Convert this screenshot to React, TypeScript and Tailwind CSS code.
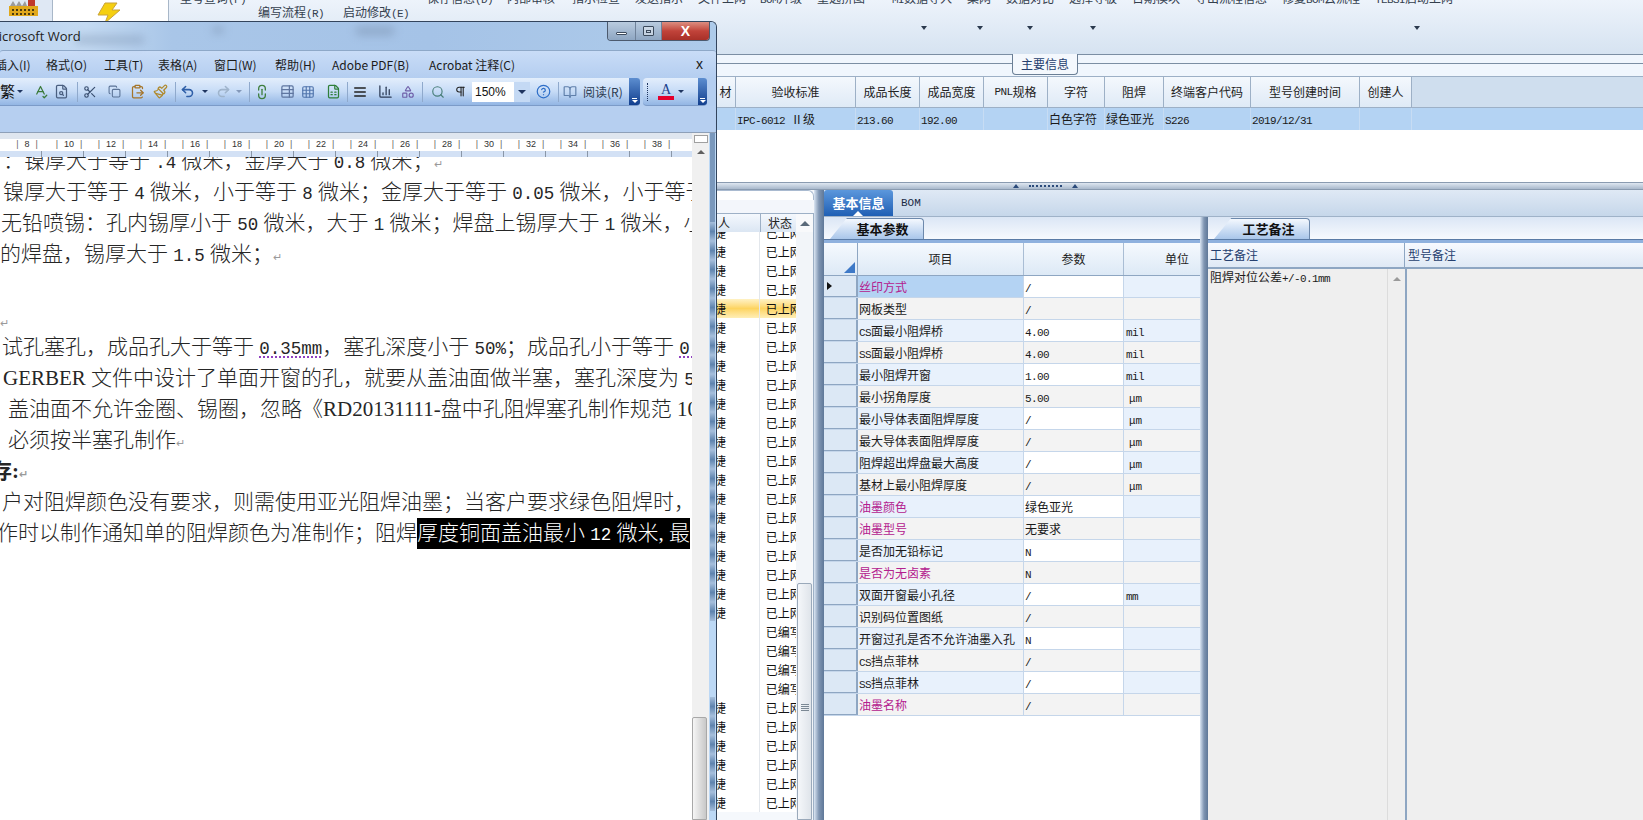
import type { ReactNode } from "react";
import {
  BookOpen, CircleHelp, ClipboardPaste, Copy, FileSearch, FileSpreadsheet, Grid3x3, Link2,
  Paintbrush, Pilcrow, Redo2, Scissors, Search, SpellCheck, TableProperties, Undo2, AlignJustify,
  BarChart3, Shapes,
} from "lucide-react";

const CJK = "font-['Noto_Sans_CJK_SC','Liberation_Sans',sans-serif]";

// ascii parts of the old app are half width bitmap glyphs, mono squeezed to 6px a char
const mix = (text: string) =>
  text.split(/([\x20-\x7e]+)/).filter(Boolean).map((part, i) =>
    /^[\x20-\x7e]+$/.test(part) ? (
      <span key={i} className="font-['Liberation_Mono',monospace] text-[11px] tracking-[-0.6px]">{part}</span>
    ) : (
      <span key={i}>{part}</span>
    )
  );

const ribbonItems = [
  { t: "型号查询(F)", w: "w-[247px]" },
  { t: "保存信息(D)", w: "w-[80px]" },
  { t: "内部审核", w: "w-[65px]" },
  { t: "指示检查", w: "w-[63px]" },
  { t: "发送指示", w: "w-[63px]" },
  { t: "文件上网", w: "w-[62px]" },
  { t: "BOM升级", w: "w-[57px]" },
  { t: "重选拼图", w: "w-[75px]" },
  { t: "MI数据导入", w: "w-[75px]" },
  { t: "集网", w: "w-[39px]" },
  { t: "数据对比", w: "w-[63px]" },
  { t: "选择导板", w: "w-[63px]" },
  { t: "日期模块", w: "w-[63px]" },
  { t: "导出流程信息", w: "w-[87px]" },
  { t: "修复BOM云流程", w: "w-[93px]" },
  { t: "TEBSI启动上网", w: "w-[90px]" },
];

const gridCols = [
  { h: "材", v: "", w: "w-[20px]" },
  { h: "验收标准", v: "IPC-6012 Ⅱ级", w: "w-[120px]" },
  { h: "成品长度", v: "213.60", w: "w-[64px]" },
  { h: "成品宽度", v: "192.00", w: "w-[64px]" },
  { h: "PNL规格", v: "", w: "w-[64px]" },
  { h: "字符", v: "白色字符", w: "w-[57px]" },
  { h: "阻焊", v: "绿色亚光", w: "w-[59px]" },
  { h: "终端客户代码", v: "S226", w: "w-[87px]" },
  { h: "型号创建时间", v: "2019/12/31", w: "w-[109px]" },
  { h: "创建人", v: "", w: "w-[52px]" },
];

const params = [
  { n: "丝印方式", v: "/", u: "", hot: true, sel: true },
  { n: "网板类型", v: "/", u: "" },
  { n: "CS面最小阻焊桥", v: "4.00", u: "mil" },
  { n: "SS面最小阻焊桥", v: "4.00", u: "mil" },
  { n: "最小阻焊开窗", v: "1.00", u: "mil" },
  { n: "最小拐角厚度", v: "5.00", u: "μm" },
  { n: "最小导体表面阻焊厚度", v: "/", u: "μm" },
  { n: "最大导体表面阻焊厚度", v: "/", u: "μm" },
  { n: "阻焊超出焊盘最大高度", v: "/", u: "μm" },
  { n: "基材上最小阻焊厚度", v: "/", u: "μm" },
  { n: "油墨颜色", v: "绿色亚光", u: "", hot: true },
  { n: "油墨型号", v: "无要求", u: "", hot: true },
  { n: "是否加无铅标记", v: "N", u: "" },
  { n: "是否为无卤素", v: "N", u: "", hot: true },
  { n: "双面开窗最小孔径", v: "/", u: "mm" },
  { n: "识别码位置图纸", v: "/", u: "" },
  { n: "开窗过孔是否不允许油墨入孔", v: "N", u: "" },
  { n: "CS挡点菲林", v: "/", u: "" },
  { n: "SS挡点菲林", v: "/", u: "" },
  { n: "油墨名称", v: "/", u: "", hot: true },
];

// rows of the list behind the word window, index 4 is the hovered one, 21-24 have no person
const listRows = Array.from({ length: 31 }, (_, i) => i);

const menuItems = [
  { t: "插入(I)", w: "w-[51px] -ml-[5px]" },
  { t: "格式(O)", w: "w-[58px]" },
  { t: "工具(T)", w: "w-[54px]" },
  { t: "表格(A)", w: "w-[56px]" },
  { t: "窗口(W)", w: "w-[61px]" },
  { t: "帮助(H)", w: "w-[57px]" },
  { t: "Adobe PDF(B)", w: "w-[97px]" },
  { t: "Acrobat 注释(C)", w: "w-[120px]" },
];

const rulerMarks = [8, 10, 12, 14, 16, 18, 20, 22, 24, 26, 28, 30, 32, 34, 36, 38];

const Mark = () => <span className="font-['DejaVu_Sans',sans-serif] text-[11px] text-[#9a9a9a]">↵</span>;
// numbers in the document are half width song glyphs
const Num = ({ children }: { children: ReactNode }) => (
  <span className="font-['Liberation_Mono',monospace] text-[17.5px]">{children}</span>
);

const Tool = ({ className = "", children }: { className?: string; children: ReactNode }) => (
  <span className={`flex w-[20px] shrink-0 items-center justify-center ${className}`}>{children}</span>
);
const Drop = ({ className = "" }: { className?: string }) => (
  <span className={`flex w-[8px] shrink-0 justify-center ${className}`}>
    <span className="border-x-[3px] border-t-[3px] border-x-transparent border-t-[#1f3560]" />
  </span>
);
const Sep = ({ className = "" }: { className?: string }) => (
  <span className={`h-[20px] w-px shrink-0 bg-[#8fa9cc] ${className}`} />
);
const RibbonArrow = ({ className = "" }: { className?: string }) => (
  <span className={`h-0 w-0 shrink-0 border-x-[3px] border-t-[4px] border-x-transparent border-t-[#2b3a4e] ${className}`} />
);
const Grip = ({ className = "" }: { className?: string }) => (
  <span className={`flex h-full shrink-0 flex-col items-center justify-end gap-[1px] rounded-r-[3px] bg-gradient-to-b from-[#5d8ed0] to-[#123f8e] pb-[2px] ${className}`}>
    <span className="h-[1px] w-[5px] bg-white" />
    <span className="border-x-[3px] border-t-[3px] border-x-transparent border-t-white" />
  </span>
);

const SplitterV = ({ className = "" }: { className?: string }) => (
  <div className={`flex shrink-0 flex-col items-center bg-gradient-to-r from-[#dbe6f3] via-[#7f95b2] to-[#5f7898] ${className}`} />
);

const ListPanel = () => (
  <div className="flex w-[97px] shrink-0 flex-col bg-[#f5f8fc]">
    <div className="h-[10px] shrink-0 rounded-tr-[6px] border-r border-t border-[#a9bad0] bg-white" />
    <div className="h-[13px] shrink-0 bg-[#f3f6fb]" />
    <div className="flex min-h-0 flex-1 border-r border-t border-[#9db0c6]">
      <div className="flex min-w-0 flex-1 flex-col overflow-hidden">
        <div className="relative z-10 flex h-[18px] shrink-0 items-center bg-gradient-to-b from-[#f4f8fd] to-[#dbe6f3] text-[12px] text-[#222]">
          <div className="h-full w-[44px] border-r border-[#9db0c6] pl-px leading-[18px]">人</div>
          <div className="pl-[7px] leading-[18px]">状态</div>
        </div>
        <div className="-mt-[9px] flex flex-col bg-white">
          {listRows.map((i) => {
            const blank = i >= 21 && i <= 24;
            return (
              <div
                key={i}
                className={`flex h-[19px] shrink-0 items-center text-[12px] text-[#111] ${
                  i === 4 ? "bg-gradient-to-b from-[#fff2c4] via-[#fdd45f] to-[#ffeeb5]" : ""
                }`}
              >
                <div className="h-full w-[44px] overflow-hidden border-r border-[#e3e7ec] leading-[19px]">
                  {!blank && <span className="-ml-[3px] block w-[14px] overflow-hidden">捷</span>}
                </div>
                <div className="w-[37px] overflow-hidden whitespace-nowrap pl-[6px] leading-[19px]">
                  {blank ? "已编写" : "已上网"}
                </div>
              </div>
            );
          })}
        </div>
      </div>
      <div className="flex w-[17px] shrink-0 flex-col bg-[#f2f5f9]">
        <div className="flex h-[18px] shrink-0 items-center justify-center bg-[#f8f9fb]">
          <span className="border-x-[5px] border-b-[5px] border-x-transparent border-b-[#5a6a7a]" />
        </div>
        <div className="h-[351px] shrink-0" />
        <div className="mx-px flex flex-1 flex-col items-center rounded-t-[2px] border border-[#9aa9ba] bg-gradient-to-r from-[#f5f7fa] to-[#dfe4ea] pt-[120px]">
          <span className="h-px w-[8px] bg-[#7b8894]" />
          <span className="mt-px h-px w-[8px] bg-[#7b8894]" />
          <span className="mt-px h-px w-[8px] bg-[#7b8894]" />
          <span className="mt-px h-px w-[8px] bg-[#7b8894]" />
        </div>
      </div>
    </div>
  </div>
);

const PanelTab = ({ label, className }: { label: string; className: string }) => (
  <div className="flex h-[22px] shrink-0 items-end bg-gradient-to-b from-[#dbe6f5] to-[#f7fafe] pl-[6px]">
    <div
      className={`flex h-[21px] items-center justify-center rounded-tr-[4px] border-r border-t border-[#6d89ac] bg-gradient-to-b from-[#f4f8fe] to-[#a9c6ea] text-[13px] font-bold text-[#111] [clip-path:polygon(0_100%,18%_0,100%_0,100%_100%)] ${className}`}
    >
      {label}
    </div>
  </div>
);

const ParamsPanel = () => (
  <div className="flex w-[376px] shrink-0 flex-col bg-white">
    <PanelTab label="基本参数" className="w-[94px] pl-[12px]" />
    <div className="h-[4px] shrink-0 border-t border-[#5a7ba6] bg-[#8fb1de]" />
    <div className="flex h-[33px] shrink-0 border-b border-[#8ea6c2] bg-gradient-to-b from-[#f5f9fe] to-[#dde9f6] text-[12px] text-[#222]">
      <div className="relative w-[34px] border-r border-[#8ea6c2]">
        <span className="absolute bottom-[2px] right-[2px] h-0 w-0 border-b-[11px] border-l-[11px] border-b-[#3e79c7] border-l-transparent" />
      </div>
      <div className="flex w-[166px] items-center justify-center border-r border-[#a9bdd4]">项目</div>
      <div className="flex w-[100px] items-center justify-center border-r border-[#a9bdd4]">参数</div>
      <div className="flex flex-1 items-center justify-end pr-[11px]">单位</div>
    </div>
    {params.map((p, i) => {
      const even = i % 2 === 1;
      return (
        <div key={p.n} className="flex h-[22px] shrink-0 border-b border-[#c5d6ea] text-[12px] leading-[21px] text-[#1a1a1a]">
          <div className="flex w-[34px] items-center border-r-2 border-b border-[#8ea6c2] bg-[#dce8f5] pl-[3px]">
            {p.sel && <span className="border-y-[4px] border-l-[5px] border-y-transparent border-l-[#111]" />}
          </div>
          <div
            className={`w-[166px] whitespace-nowrap border-r border-[#c5d6ea] pl-px ${
              p.sel ? "bg-[#b4d3f3]" : even ? "bg-[#f3f3f3]" : "bg-[#e8f1fc]"
            } ${p.hot ? "text-[#b3208e]" : ""}`}
          >
            {mix(p.n)}
          </div>
          <div className={`w-[100px] border-r border-[#c5d6ea] pl-px ${even ? "bg-[#f3f3f3]" : "bg-white"}`}>{mix(p.v)}</div>
          <div className={`flex-1 pl-[2px] ${even ? "bg-[#f3f3f3]" : "bg-[#e8f1fc]"}`}>
            {p.u === "μm" ? <span className="pl-[3px] font-['Liberation_Mono',monospace] text-[11px]">μm</span> : mix(p.u)}
          </div>
        </div>
      );
    })}
  </div>
);

const RemarksPanel = () => (
  <div className="flex min-w-0 flex-1 flex-col bg-[#efefef]">
    <PanelTab label="工艺备注" className="w-[96px] pl-[14px]" />
    <div className="h-[4px] shrink-0 border-t border-[#5a7ba6] bg-[#8fb1de]" />
    <div className="flex h-[26px] shrink-0 border-b-2 border-[#8ea6c2] bg-gradient-to-b from-[#f7faff] to-[#dfe9f5] text-[12px] leading-[24px] text-[#26406f]">
      <div className="w-[197px] border-r border-[#8ea6c2] pl-[2px]">工艺备注</div>
      <div className="flex-1 pl-[3px]">型号备注</div>
    </div>
    <div className="flex min-h-0 flex-1">
      <div className="flex w-[180px] shrink-0 border-r border-[#dcdcdc] pl-[2px] text-[12px] leading-[16px] text-[#1a1a1a]">
        <span>{mix("阻焊对位公差+/-0.1mm")}</span>
      </div>
      <div className="flex w-[17px] shrink-0 justify-center pt-[8px]">
        <span className="h-0 w-0 border-x-[4px] border-b-[4px] border-x-transparent border-b-[#9a9a9a]" />
      </div>
      <div className="w-[2px] shrink-0 bg-[#8ea6c2]" />
    </div>
  </div>
);

const WordWindow = () => (
  <div className={`absolute bottom-0 left-0 top-[21px] flex w-[717px] flex-col overflow-hidden rounded-tr-[6px] border-r border-t border-[#33445c] bg-[#b9d4f2] text-[#111] ${CJK}`}>
    {/* aero title bar, blurred text of the app behind it */}
    <div className="relative flex h-[28px] shrink-0 items-start bg-[linear-gradient(90deg,#bcd4ef_0%,#c4daf2_12%,#a9c6e8_24%,#a5c3e7_60%,#aecbea_100%)]">
      <span className="absolute left-[75px] top-[13px] h-[10px] w-[70px] rounded-full bg-[#7e95b3] opacity-40 blur-[4px]" />
      <span className="absolute left-[355px] top-[4px] h-[10px] w-[40px] rounded-full bg-[#7e95b3] opacity-50 blur-[4px]" />
      <span className="absolute left-[212px] top-[4px] h-[8px] w-[12px] rounded-full bg-[#7e95b3] opacity-50 blur-[4px]" />
      <span className="relative -ml-[13px] mt-[5px] whitespace-nowrap font-['Open_Sans',sans-serif] text-[13px] text-[#222]">Microsoft Word</span>
      <div className="relative ml-auto mr-[6px] flex h-[19px] overflow-hidden rounded-b-[4px] border-x border-b border-[#4c5a6e]">
        <div className="flex w-[27px] items-center justify-center bg-gradient-to-b from-[#b9cbdf] to-[#8ea6c2]">
          <span className="mt-[5px] h-[3px] w-[11px] rounded-[1px] border border-[#3c4a5c] bg-white" />
        </div>
        <div className="flex w-[27px] items-center justify-center border-x border-[#6f829a] bg-gradient-to-b from-[#b9cbdf] to-[#8ea6c2]">
          <span className="flex h-[10px] w-[11px] items-center justify-center rounded-[1px] border border-[#3c4a5c] bg-white/40">
            <span className="h-[3px] w-[5px] border border-[#3c4a5c]" />
          </span>
        </div>
        <div className="flex w-[47px] items-center justify-center bg-gradient-to-b from-[#dc8d80] via-[#c1433a] to-[#a83028] pb-[1px] font-['Liberation_Sans',sans-serif] text-[14px] font-bold leading-none text-white">
          X
        </div>
      </div>
    </div>
    {/* menu bar */}
    <div className="flex h-[28px] shrink-0 items-center rounded-t-[3px] border-t border-[#8ea8c8] bg-gradient-to-b from-[#c9dcf7] to-[#b4cef0] text-[12px] text-[#1b1b1b]">
      {menuItems.map((m) => (
        <span key={m.t} className={`${m.w} shrink-0 whitespace-nowrap`}>{m.t}</span>
      ))}
      <span className="ml-auto mr-[13px] font-['Liberation_Sans',sans-serif] text-[14px]">x</span>
    </div>
    {/* toolbars */}
    <div className="flex h-[28px] shrink-0 items-center bg-[#b4cef0] pr-[9px]">
      <div className="flex h-full w-[640px] shrink-0 items-center rounded-r-[4px] border-b border-[#7c9bc8] bg-gradient-to-b from-[#e3eefc] via-[#c6dbf6] to-[#93b6e4]">
        <span className="flex w-[15px] shrink-0 justify-end overflow-hidden whitespace-nowrap text-[15px]">繁</span>
        <Drop className="ml-[1px]" />
        <Tool className="ml-[6px]"><SpellCheck size={15} className="text-[#3b7a3a]" /></Tool>
        <Tool className="ml-[1px]"><FileSearch size={15} className="text-[#4a5f80]" /></Tool>
        <Sep className="ml-[6px]" />
        <Tool className="ml-[2px]"><Scissors size={14} className="text-[#3a4f70]" /></Tool>
        <Tool className="ml-[4px]"><Copy size={13} className="text-[#5b7396]" /></Tool>
        <Tool className="ml-[3px]"><ClipboardPaste size={15} className="text-[#a5752a]" /></Tool>
        <Tool className="ml-[3px]"><Paintbrush size={15} className="text-[#b08a2e]" /></Tool>
        <Sep className="ml-[5px]" />
        <Tool className="ml-[1px]"><Undo2 size={15} strokeWidth={2.5} className="text-[#2f5fa8]" /></Tool>
        <Drop className="ml-[4px]" />
        <Tool className="ml-[4px]"><Redo2 size={15} strokeWidth={2.5} className="text-[#9fb4cc]" /></Tool>
        <Drop className="ml-[2px] opacity-40" />
        <Sep className="ml-[6px]" />
        <Tool className="ml-[2px]"><Link2 size={16} className="rotate-90 text-[#3f7f3f]" /></Tool>
        <Tool className="ml-[5px]"><TableProperties size={15} className="text-[#5f76a0]" /></Tool>
        <Tool className="ml-[1px]"><Grid3x3 size={14} className="text-[#5276ad]" /></Tool>
        <Tool className="ml-[5px]"><FileSpreadsheet size={15} className="text-[#2f7f3a]" /></Tool>
        <Sep className="ml-[4px]" />
        <Tool className="ml-[2px]"><AlignJustify size={14} strokeWidth={2.5} className="text-[#222]" /></Tool>
        <Tool className="ml-[5px]"><BarChart3 size={15} className="text-[#2b3a55]" /></Tool>
        <Tool className="ml-[3px]"><Shapes size={14} className="text-[#6f5fa8]" /></Tool>
        <Sep className="ml-[4px]" />
        <Tool className="ml-[5px]"><Search size={14} className="text-[#4a7f7a]" /></Tool>
        <Tool className="ml-[2px]"><Pilcrow size={13} className="text-[#222]" /></Tool>
        <div className="ml-[2px] flex h-[20px] w-[58px] shrink-0 items-center bg-white pl-[3px] font-['Liberation_Sans',sans-serif] text-[12px]">
          150%
          <span className="ml-auto flex h-full w-[16px] items-center justify-center bg-[#c4d9f4]">
            <span className="border-x-[4px] border-t-[4px] border-x-transparent border-t-[#1f3560]" />
          </span>
        </div>
        <Tool className="ml-[3px]"><CircleHelp size={15} className="text-[#2f6fc8]" /></Tool>
        <Sep className="ml-[5px]" />
        <Tool className="ml-[1px]"><BookOpen size={14} className="text-[#5f7faa]" /></Tool>
        <span className="ml-[3px] whitespace-nowrap text-[12px] text-[#2b3a50]">阅读(R)</span>
        <Grip className="ml-auto w-[11px]" />
      </div>
      <div className="ml-[3px] flex h-full min-w-0 flex-1 items-center rounded-[4px] border-b border-[#7c9bc8] bg-gradient-to-b from-[#e3eefc] via-[#c6dbf6] to-[#93b6e4] pl-[4px]">
        <span className="h-[18px] w-px border-l border-dotted border-[#1f3560]" />
        <span className="ml-[10px] flex flex-col items-center font-['Liberation_Serif',serif] text-[14px] leading-[13px] text-[#1c3f8c]">
          A
          <span className="h-[4px] w-[16px] bg-[#e3002c]" />
        </span>
        <Drop className="ml-[3px]" />
        <Grip className="ml-auto w-[9px]" />
      </div>
    </div>
    <div className="h-[27px] shrink-0 border-b border-[#8ea0b8] bg-[#b6cff0]" />
    {/* document area with scrollbar and right hand frame */}
    <div className="flex min-h-0 flex-1">
      <div className="flex w-[692px] shrink-0 flex-col overflow-hidden bg-white">
        <div className="h-[6px] shrink-0 bg-[#dfe6ef]" />
        <div className="flex h-[12px] shrink-0 items-center bg-white font-['Liberation_Sans',sans-serif] text-[9px] text-[#333]">
          {rulerMarks.map((m, i) => (
            <span key={m} className={`flex w-[42px] shrink-0 justify-center gap-[6px] ${i === 0 ? "ml-[6px]" : ""}`}>
              <span className="text-[#666]">|</span>{m}<span className="text-[#666]">|</span>
            </span>
          ))}
        </div>
        <div className="h-[6px] shrink-0 bg-[#d3e1f5] bg-[repeating-linear-gradient(90deg,transparent_0,transparent_41px,#8a97a8_41px,#8a97a8_42px)]" />
        <div className="min-h-0 flex-1 overflow-hidden">
          <div className="-mt-[11px] whitespace-nowrap font-['Liberation_Serif','Noto_Sans_CJK_SC',serif] text-[21px] font-light leading-[31px] text-[#262626]">
            <p className="h-[31px] overflow-hidden pl-[3px]">：镍厚大于等于 <Num>.4</Num> 微米，金厚大于 <Num>0.8</Num> 微米；<Mark /></p>
            <p className="h-[31px] pl-[3px]">镍厚大于等于 <Num>4</Num> 微米，小于等于 <Num>8</Num> 微米；金厚大于等于 <Num>0.05</Num> 微米，小于等于</p>
            <p className="h-[31px] pl-px">无铅喷锡：孔内锡厚小于 <Num>50</Num> 微米，大于 <Num>1</Num> 微米；焊盘上锡厚大于 <Num>1</Num> 微米，小于</p>
            <p className="h-[31px]">的焊盘，锡厚大于 <Num>1.5</Num> 微米；<Mark /></p>
            <p className="h-[31px]" />
            <p className="h-[31px] pt-[4px]"><Mark /></p>
            <p className="h-[31px] pl-[2px]">
              试孔塞孔，成品孔大于等于 <span className="underline decoration-[#9040c0] decoration-dotted"><Num>0.35mm</Num></span>，塞孔深度小于 <Num>50%</Num>；成品孔小于等于 <span className="underline decoration-[#9040c0] decoration-dotted"><Num>0.35</Num></span>
            </p>
            <p className="h-[31px] pl-[3px]">GERBER 文件中设计了单面开窗的孔，就要从盖油面做半塞，塞孔深度为 <Num>50</Num></p>
            <p className="h-[31px] pl-[8px]">盖油面不允许金圈、锡圈，忽略《RD20131111-盘中孔阻焊塞孔制作规范 10</p>
            <p className="h-[31px] pl-[8px]">必须按半塞孔制作<Mark /></p>
            <p className="h-[31px] -ml-[9px] font-bold">存:<Mark /></p>
            <p className="h-[31px] pl-[2px]">户对阻焊颜色没有要求，则需使用亚光阻焊油墨；当客户要求绿色阻焊时，</p>
            <p className="flex h-[31px]">
              <span className="w-[417px] shrink-0 overflow-hidden"><span className="-ml-[3px] block w-[430px]">作时以制作通知单的阻焊颜色为准制作；阻焊</span></span>
              <span className="w-[273px] shrink-0 overflow-hidden bg-black text-white">厚度铜面盖油最小 <Num>12</Num> 微米, 最</span>
            </p>
          </div>
        </div>
      </div>
      <div className="flex w-[17px] shrink-0 flex-col items-center bg-[#f0f0f0]">
        <div className="mt-[2px] h-[8px] w-[14px] border border-[#a0a0a0] bg-white" />
        <div className="mt-[7px] h-0 w-0 border-x-[4px] border-b-[4px] border-x-transparent border-b-[#606060]" />
        <div className="mb-0 mt-auto h-[103px] w-[15px] self-start rounded-t-[2px] border border-[#a8a8a8] bg-gradient-to-r from-[#f6f6f6] to-[#c8c8c8]" />
      </div>
      <div className="flex min-w-0 flex-1 flex-col items-center overflow-hidden bg-[#bcd8f5]">
        <span className="h-[89px] w-[5px] shrink-0 bg-[#7a98bc]" />
        {listRows.map((i) => (
          <span
            key={i}
            className={`h-[19px] w-[5px] shrink-0 ${i >= 21 && i <= 24 ? "" : "bg-gradient-to-b from-[#a6bfdc] via-[#5f84ae] to-[#a6bfdc]"}`}
          />
        ))}
      </div>
    </div>
  </div>
);

export default function App() {
  return (
    <div className={`relative flex h-[820px] w-[1643px] flex-col overflow-hidden bg-white text-[#222] ${CJK}`}>
      {/* ribbon of the erp app */}
      <div className="flex h-[55px] shrink-0 border-b border-[#7b8ea3]">
        <div className="flex w-[53px] shrink-0 justify-center border-r border-[#a8b7c8] bg-[#dfe8f4]">
          <svg width="30" height="16" viewBox="0 0 30 16" className="ml-[-5px]">
            <path d="M1 6 L4 1 L7 6 L10 1 L13 6 L16 1 L18 6Z" fill="#9b9b9b" />
            <rect x="19" y="0" width="7" height="6" fill="#c0392b" />
            <rect x="0" y="6" width="29" height="10" fill="#e0a81c" />
            <path d="M3 9h2v2H3zM7 9h2v2H7zM11 9h2v2h-2zM15 9h2v2h-2zM19 9h2v2h-2zM23 9h2v2h-2zM3 13h2v2H3zM7 13h2v2H7zM11 13h2v2h-2zM15 13h2v2h-2zM19 13h2v2h-2zM23 13h2v2h-2z" fill="#4a3a10" />
          </svg>
        </div>
        <div className="flex w-[116px] shrink-0 justify-center border-r border-[#a8b7c8] bg-white pt-[2px]">
          <svg width="24" height="22" viewBox="0 0 24 22" className="-ml-[4px]">
            <path d="M8 1 L20 1 L15 8 L23 8 L8 21 L11 13 L1 13Z" fill="#f5cf10" stroke="#c9a33a" strokeWidth="1" />
          </svg>
        </div>
        <div className="flex min-w-0 flex-1 flex-col bg-gradient-to-b from-[#edf3fb] to-[#d6e3f1] text-[12px] text-[#34404e]">
          <div className="-mt-[10px] flex h-[14px] shrink-0 pl-[11px] leading-[16px]">
            {ribbonItems.map((r) => (
              <span key={r.t} className={`${r.w} shrink-0 whitespace-nowrap`}>{mix(r.t)}</span>
            ))}
          </div>
          <div className="flex h-[16px] shrink-0 pl-[89px] leading-[16px]">
            <span className="w-[85px] shrink-0">{mix("编写流程(R)")}</span>
            <span>{mix("启动修改(E)")}</span>
          </div>
          <div className="mt-[6px] flex items-center pl-[752px]">
            <RibbonArrow />
            <RibbonArrow className="ml-[50px]" />
            <RibbonArrow className="ml-[44px]" />
            <RibbonArrow className="ml-[57px]" />
            <RibbonArrow className="ml-[318px]" />
          </div>
        </div>
      </div>
      {/* main info divider */}
      <div className="flex h-[21px] shrink-0 bg-[#f0f6fd]">
        <div className="h-[9px] flex-1 border-b border-[#7b8ea3]" />
        <div className="-mt-px flex h-[21px] w-[66px] shrink-0 items-center justify-center rounded-b-[4px] border-x border-b border-[#6b7f95] bg-[#f4f8fd] text-[12px] text-[#26406f]">
          主要信息
        </div>
        <div className="h-[9px] w-[565px] shrink-0 border-b border-[#7b8ea3]" />
      </div>
      {/* product grid */}
      <div className="flex h-[32px] shrink-0 border-y border-[#9db0c6] bg-[#cfdeee] pl-[716px] text-[12px] text-[#222]">
        {gridCols.map((c) => (
          <div key={c.h} className={`${c.w} flex shrink-0 items-center justify-center overflow-hidden whitespace-nowrap border-r border-[#9db0c6] bg-gradient-to-b from-[#f4f8fd] to-[#dfeaf6]`}>
            {mix(c.h)}
          </div>
        ))}
      </div>
      <div className="flex h-[22px] shrink-0 bg-[#b4d3f3] pl-[716px] text-[12px] leading-[22px] text-[#1a1a1a]">
        {gridCols.map((c) => (
          <div key={c.h} className={`${c.w} shrink-0 overflow-hidden whitespace-nowrap border-r border-[#c7dcf3] pl-px`}>
            {mix(c.v)}
          </div>
        ))}
      </div>
      <div className="h-[52px] shrink-0 bg-white" />
      {/* splitter */}
      <div className="flex h-[8px] shrink-0 items-center justify-center gap-[10px] border-y border-[#8a9bb0] bg-gradient-to-b from-[#dfe7f1] to-[#a9b9cc] pl-[447px]">
        <span className="border-x-[3px] border-b-[4px] border-x-transparent border-b-[#2b4a7a]" />
        <span className="h-[2px] w-[33px] border-t-2 border-dotted border-[#2b4a7a]" />
        <span className="border-x-[3px] border-b-[4px] border-x-transparent border-b-[#2b4a7a]" />
      </div>
      {/* lower half: list, detail tabs with the two panels */}
      <div className="flex min-h-0 flex-1">
        <div className="w-[717px] shrink-0" />
        <ListPanel />
        <SplitterV className="w-[10px]" />
        <div className="flex min-w-0 flex-1 flex-col">
          <div className="flex h-[27px] shrink-0 border-b border-[#9fb2c8] bg-gradient-to-b from-[#dfe9f5] to-[#c6d7ea]">
            <div className="relative flex h-full w-[69px] items-center justify-center rounded-t-[3px] bg-gradient-to-b from-[#5b97dc] to-[#1f5fb4] text-[13px] font-bold text-white">
              基本信息
              <span className="absolute bottom-0 left-[29px] border-x-[5px] border-b-[5px] border-x-transparent border-b-white" />
            </div>
            <span className="ml-[8px] font-['Liberation_Mono',monospace] text-[11px] leading-[26px] text-[#1a2a44]">BOM</span>
          </div>
          <div className="flex min-h-0 flex-1">
            <ParamsPanel />
            <SplitterV className="w-[8px]" />
            <RemarksPanel />
          </div>
        </div>
      </div>
      <WordWindow />
    </div>
  );
}
